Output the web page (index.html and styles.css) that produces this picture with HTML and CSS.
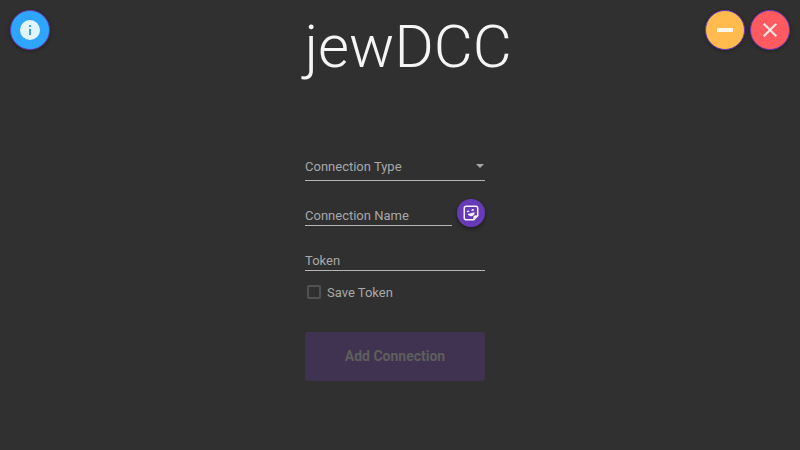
FILE: index.html
```html
<!DOCTYPE html>
<html lang="en">
<head>
    <meta charset="UTF-8">
    <meta name="viewport" content="width=device-width, initial-scale=1.0">
    <title>jewDCC</title>
    <link rel="stylesheet" href="styles.css">
</head>
<body>
    <div class="header">
        <div class="left-head">
            <button class="round info">
                <svg viewBox="0 0 24 24" width="24" height="24"><path d="M13,9H11V7H13M13,17H11V11H13M12,2A10,10 0 0,0 2,12A10,10 0 0,0 12,22A10,10 0 0,0 22,12A10,10 0 0,0 12,2Z"/></svg>
            </button>
        </div>
        <h1>jewDCC</h1>
        <div class="right-head">
            <button class="round minimize">
                <svg viewBox="0 0 24 24" width="24" height="24"><path d="M20,14H4V10H20V14Z"/></svg>
            </button>
            <button class="round quit">
                <svg viewBox="0 0 24 24" width="24" height="24"><path d="M19,6.41L17.59,5L12,10.59L6.41,5L5,6.41L10.59,12L5,17.59L6.41,19L12,13.41L17.59,19L19,17.59L13.41,12L19,6.41Z"/></svg>
            </button>
        </div>
    </div>

    <div class="form">
        <div class="field select-field">
            <span class="label">Connection Type</span>
            <span class="arrow"></span>
        </div>
        <div class="name-row">
            <div class="field">
                <span class="label">Connection Name</span>
            </div>
            <button class="sticker">
                <svg viewBox="0 0 24 24" width="18" height="18"><path d="M5.5,2C3.56,2 2,3.56 2,5.5V18.5C2,20.44 3.56,22 5.5,22H16L22,16V5.5C22,3.56 20.44,2 18.5,2H5.5M5.75,4H18.25A1.75,1.75 0 0,1 20,5.75V15H18.5C16.56,15 15,16.56 15,18.5V20H5.75A1.75,1.75 0 0,1 4,18.25V5.75A1.75,1.75 0 0,1 5.75,4M14.44,6.77C14.28,6.77 14.12,6.79 13.97,6.83C13.03,7.08 12.5,8.05 12.74,9C12.79,9.15 12.86,9.3 12.95,9.44L16.18,8.56C16.18,8.39 16.16,8.22 16.12,8.05C15.91,7.3 15.22,6.77 14.44,6.77M8.17,8.5C8,8.5 7.85,8.5 7.7,8.55C6.77,8.81 6.22,9.77 6.47,10.7C6.5,10.86 6.59,11 6.68,11.16L9.91,10.28C9.91,10.11 9.89,9.94 9.85,9.78C9.64,9 8.95,8.5 8.17,8.5M16.72,11L7.59,13.45C8.35,15.32 10.24,16.5 12.26,16.35C14.28,16.2 16.03,14.83 16.72,12.91V11Z"/></svg>
            </button>
        </div>
        <div class="field token-field">
            <span class="label">Token</span>
        </div>
        <div class="save-row">
            <span class="checkbox"></span>
            <span class="save-label">Save Token</span>
        </div>
        <button class="add-btn">Add Connection</button>
    </div>
</body>
</html>
```

FILE: styles.css
```css
*{
    margin: 0px;
    padding: 0px;
    box-sizing: border-box;
    font-family: 'Roboto', sans-serif;
}
body{
    width: 800px;
    height: 450px;
    overflow: hidden;
    background-color: #303030;
}

/* header */
.header{
    display: grid;
    grid-template-columns: 1fr auto 1fr;
    height: 142px;
    padding: 10px;
}
.left-head{
    display: flex;
    gap: 5px;
}
.right-head{
    display: flex;
    justify-content: flex-end;
    gap: 5px;
}
.header h1{
    margin-top: 1px;
    margin-left: 16px;
    font-size: 60px;
    font-weight: 300;
    line-height: 72px;
    color: #f5f5f5;
}
.round{
    display: flex;
    align-items: center;
    justify-content: center;
    width: 40px;
    height: 40px;
    border: 1px solid #673ab7;
    border-radius: 50%;
    box-shadow: 0 1px 4px rgba(0, 0, 0, 0.3);
}
.round svg{
    fill: rgba(255, 255, 255, 0.87);
}
.info{
    background-color: #2ea6ff;
}
.minimize{
    background-color: #ffbb4d;
}
.quit{
    background-color: #ff5a60;
}

/* form */
.form{
    display: flex;
    flex-direction: column;
    width: 180px;
    margin-left: 305px;
}
.field{
    display: flex;
    align-items: center;
    justify-content: space-between;
    height: 39px;
    padding-top: 10px;
    border-bottom: 1px solid #b5b5b5;
}
.label{
    font-size: 13px;
    color: #a8a8a8;
}
.arrow{
    width: 0;
    height: 0;
    margin-right: 1px;
    border-left: 4px solid transparent;
    border-right: 4px solid transparent;
    border-top: 4px solid #a8a8a8;
}
.name-row{
    display: flex;
    align-items: flex-end;
    gap: 5px;
    margin-top: 6px;
    height: 39px;
}
.name-row .field{
    flex: 1;
    height: 28px;
    padding-top: 8px;
}
.sticker{
    display: flex;
    align-items: center;
    justify-content: center;
    width: 28px;
    height: 28px;
    margin-bottom: -1px;
    border: none;
    border-radius: 50%;
    background-color: #673ab7;
    box-shadow: 0 2px 4px rgba(0, 0, 0, 0.4);
}
.sticker svg{
    fill: #f5f0fa;
}
.token-field{
    height: 34px;
    margin-top: 11px;
    padding-top: 14px;
}
.save-row{
    display: flex;
    align-items: center;
    gap: 6px;
    height: 20px;
    margin-top: 11px;
    padding-left: 2px;
}
.checkbox{
    width: 14px;
    height: 14px;
    border: 2px solid #505355;
    border-radius: 2px;
}
.save-label{
    font-size: 13px;
    color: #a8a8a8;
}
.add-btn{
    width: 180px;
    height: 49px;
    margin-top: 30px;
    padding-bottom: 2px;
    border: none;
    border-radius: 3px;
    background-color: #403351;
    font-size: 14px;
    font-weight: 700;
    color: #5e5e5e;
}
```
